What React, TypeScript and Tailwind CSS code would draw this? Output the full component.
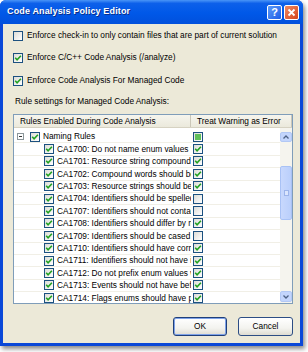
const rules: { text: string; err: boolean }[] = [
  { text: "CA1700: Do not name enum values 'Reserved'", err: true },
  { text: "CA1701: Resource string compound words should be cased correctly", err: true },
  { text: "CA1702: Compound words should be cased correctly", err: true },
  { text: "CA1703: Resource strings should be spelled correctly", err: true },
  { text: "CA1704: Identifiers should be spelled correctly", err: false },
  { text: "CA1707: Identifiers should not contain underscores", err: false },
  { text: "CA1708: Identifiers should differ by more than case", err: true },
  { text: "CA1709: Identifiers should be cased correctly", err: false },
  { text: "CA1710: Identifiers should have correct suffix", err: true },
  { text: "CA1711: Identifiers should not have incorrect suffix", err: true },
  { text: "CA1712: Do not prefix enum values with type name", err: true },
  { text: "CA1713: Events should not have before or after prefix", err: true },
  { text: "CA1714: Flags enums should have plural names", err: true },
];

function Check({ on, mixed }: { on?: boolean; mixed?: boolean }) {
  return (
    <div className="w-[10px] h-[10px] shrink-0 border border-[#1c5180] bg-[linear-gradient(135deg,#dcdcd7,#ffffff)] flex items-center justify-center">
      {on && (
        <svg width="8" height="8" viewBox="0 0 8 8">
          <path d="M1.2 3.8 L3.1 5.8 L6.9 1.8" fill="none" stroke="#21a121" strokeWidth="1.6" />
        </svg>
      )}
      {mixed && <div className="w-[6px] h-[6px] bg-[#5fbf5a]" />}
    </div>
  );
}

function XpButton({ label, def }: { label: string; def?: boolean }) {
  return (
    <div
      className={
        "h-[19px] rounded-[3px] border flex items-center justify-center bg-[linear-gradient(to_bottom,#ffffff,#f3f3ef_60%,#dedcd2)] text-[8.3px] text-black " +
        (def ? "w-[54px] border-[#1f3f7a] shadow-[inset_0_0_0_1px_#7ea2e8]" : "w-[55px] border-[#2c4d84]")
      }
    >
      {label}
    </div>
  );
}

export default function App() {
  return (
    <div className="w-[308px] h-[352px] bg-white" style={{ fontFamily: "'Liberation Sans', Arial, sans-serif" }}>
      <div className="w-[303px] h-[346px] flex flex-col rounded-t-[6px] bg-[#0a48d8] shadow-[2px_3px_4px_rgba(0,0,0,0.45)] overflow-hidden">
        {/* title bar */}
        <div className="h-[24px] shrink-0 flex items-center pl-[7px] pr-[4px] bg-[linear-gradient(to_bottom,#4a95f7_0%,#0d60ea_14%,#0058e8_55%,#0150dc_100%)]">
          <div className="flex-1 text-white font-bold text-[9px] tracking-[0.15px] [text-shadow:1px_1px_0_#0b2f8a]">
            Code Analysis Policy Editor
          </div>
          <div className="w-[15px] h-[15px] rounded-[2px] border border-white bg-[linear-gradient(135deg,#5c9bf9,#1d5ce6)] flex items-center justify-center text-white font-bold text-[11px] leading-none">
            ?
          </div>
          <div className="ml-[2px] w-[15px] h-[15px] rounded-[2px] border border-white bg-[linear-gradient(135deg,#f08a62,#d4441c)] flex items-center justify-center">
            <svg width="9" height="9" viewBox="0 0 9 9">
              <path d="M1.5 1.5 L7.5 7.5 M7.5 1.5 L1.5 7.5" stroke="#fff" strokeWidth="1.8" />
            </svg>
          </div>
        </div>

        {/* body */}
        <div className="flex-1 mx-[3px] mb-[3px] bg-[#ece9d8] flex flex-col pl-[10px] pr-[7px] pt-[6px] text-[8.3px] text-black">
          <div className="h-[11px] flex items-center gap-[4px]">
            <Check />
            <span>Enforce check-in to only contain files that are part of current solution</span>
          </div>
          <div className="h-[11px] mt-[11px] flex items-center gap-[4px]">
            <Check on />
            <span>Enforce C/C++ Code Analysis (/analyze)</span>
          </div>
          <div className="h-[11px] mt-[12px] flex items-center gap-[4px]">
            <Check on />
            <span>Enforce Code Analysis For Managed Code</span>
          </div>
          <div className="h-[11px] mt-[10px] flex items-center pl-[2px]">Rule settings for Managed Code Analysis:</div>

          {/* list */}
          <div className="mt-[7px] h-[190px] border border-[#7f9db9] bg-white flex flex-col overflow-hidden">
            <div className="h-[13px] shrink-0 flex bg-[linear-gradient(to_bottom,#f6f5ee,#ebe9dc)] border-b border-[#d6d2c2]">
              <div className="w-[177px] pl-[6px] flex items-center border-r border-[#cbc7b8] whitespace-nowrap overflow-hidden">Rules Enabled During Code Analysis</div>
              <div className="flex-1 pl-[6px] flex items-center border-r border-[#cbc7b8] whitespace-nowrap overflow-hidden">Treat Warning as Error</div>
            </div>
            <div className="flex-1 flex min-h-0">
              <div className="flex-1 pt-[3px] overflow-hidden">
                <div className="h-[12.4px] flex items-center border-b border-[#f1efe6]">
                  <div className="w-[177px] shrink-0 flex items-center pl-[3px] overflow-hidden whitespace-nowrap">
                    <div className="w-[7px] h-[7px] border border-[#8c979b] bg-white flex items-center justify-center">
                      <div className="w-[3px] h-[1px] bg-[#333]" />
                    </div>
                    <div className="ml-[6px]">
                      <Check on />
                    </div>
                    <span className="ml-[3px]">Naming Rules</span>
                  </div>
                  <div className="pl-[2px]">
                    <Check mixed />
                  </div>
                </div>
                {rules.map((r) => (
                  <div key={r.text} className="h-[12.4px] flex items-center border-b border-[#f1efe6]">
                    <div className="w-[177px] shrink-0 flex items-center pl-[30px] overflow-hidden whitespace-nowrap">
                      <Check on />
                      <span className="ml-[3px]">{r.text}</span>
                    </div>
                    <div className="pl-[2px]">
                      <Check on={r.err} />
                    </div>
                  </div>
                ))}
              </div>
              {/* scrollbar */}
              <div className="w-[12px] shrink-0 bg-[#f5f4ee] flex flex-col pt-[4px] pb-[1px]">
                <div className="h-[10px] rounded-[2px] bg-[#c3d5fc] border border-[#b2c8f5] flex items-center justify-center">
                  <svg width="6" height="4" viewBox="0 0 6 4">
                    <path d="M0.5 3.5 L3 1 L5.5 3.5" fill="none" stroke="#4d6185" strokeWidth="1.3" />
                  </svg>
                </div>
                <div className="mt-[24px] h-[54px] rounded-[2px] bg-[linear-gradient(to_right,#c8d8fd,#bacffb)] border border-[#a9c2f5] flex items-center justify-center">
                  <div className="w-[5px] h-[6px] border border-[#9cb4ea] bg-[#dae5fd]" />
                </div>
                <div className="flex-1" />
                <div className="h-[11px] rounded-[2px] bg-[#c3d5fc] border border-[#b2c8f5] flex items-center justify-center">
                  <svg width="6" height="4" viewBox="0 0 6 4">
                    <path d="M0.5 0.5 L3 3 L5.5 0.5" fill="none" stroke="#4d6185" strokeWidth="1.3" />
                  </svg>
                </div>
              </div>
            </div>
          </div>

          <div className="mt-[13px] flex justify-end gap-[11px]">
            <XpButton label="OK" def />
            <XpButton label="Cancel" />
          </div>
        </div>
      </div>
    </div>
  );
}
